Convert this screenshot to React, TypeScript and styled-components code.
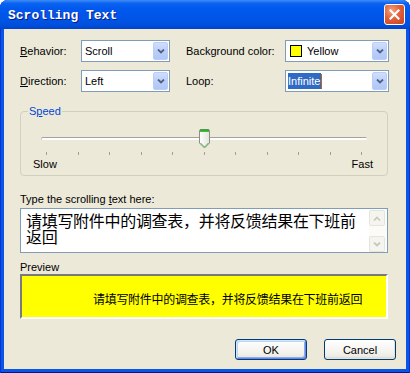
import React from 'react';
import styled, { createGlobalStyle } from 'styled-components';

const GlobalStyle = createGlobalStyle`
  html, body {
    margin: 0;
    padding: 0;
    background: #ffffff;
  }
  body {
    font-family: "Liberation Sans", Arial, sans-serif;
    font-size: 11px;
    color: #000;
  }
`;

const Window = styled.div`
  width: 410px;
  height: 373px;
  box-sizing: border-box;
  display: flex;
  flex-direction: column;
  background: #0b55e4;
  border-radius: 8px 8px 0 0;
  overflow: hidden;
  box-shadow: inset 1px 0 0 #0831d9, inset -1px 0 0 #0831d9, inset 0 -1px 0 #00138c;
`;

const TitleBar = styled.div`
  height: 29px;
  flex-shrink: 0;
  display: flex;
  align-items: center;
  justify-content: space-between;
  padding: 0 5px 0 8px;
  background: linear-gradient(180deg, #3d8cf7 0%, #0a62f0 12%, #0058ee 30%, #0055e6 60%, #0050df 85%, #0242c8 100%);
`;

const Title = styled.span`
  font-family: "Liberation Mono", "Courier New", monospace;
  font-weight: bold;
  font-size: 13px;
  color: #fff;
  text-shadow: 1px 1px 0 #0a1a8a;
  margin-top: 1px;
`;

const CloseButton = styled.div`
  width: 21px;
  height: 21px;
  box-sizing: border-box;
  border: 1px solid #fff;
  border-radius: 3px;
  display: flex;
  align-items: center;
  justify-content: center;
  background: radial-gradient(circle at 35% 30%, #f3a27f 0%, #e2613a 45%, #c7411b 100%);
`;

const Content = styled.div`
  flex: 1;
  margin: 0 4px 4px;
  background: #ece9d8;
  padding: 11px 18px 9px 16px;
  display: flex;
  flex-direction: column;
`;

const FieldsGrid = styled.div`
  display: grid;
  grid-template-columns: 61px 105px 99px 104px;
  row-gap: 8px;
  align-items: center;
`;

const Label = styled.span`
  line-height: 14px;
  white-space: nowrap;
`;

const Combo = styled.div<{ $width: number }>`
  width: ${(p) => p.$width}px;
  height: 22px;
  box-sizing: border-box;
  border: 1px solid #7f9db9;
  background: #fff;
  display: flex;
  align-items: center;
`;

const ComboValue = styled.div`
  flex: 1;
  display: flex;
  align-items: center;
  padding-left: 3px;
  line-height: 14px;
  white-space: nowrap;
`;

const Swatch = styled.span<{ $color: string }>`
  width: 12px;
  height: 12px;
  box-sizing: border-box;
  border: 1px solid #000;
  background: ${(p) => p.$color};
  margin: 0 5px 0 1px;
`;

const Selected = styled.span`
  background: #316ac5;
  color: #fff;
  padding: 1px 1px 1px 0;
  margin-left: -1px;
`;

const Caret = styled.span`
  width: 1px;
  height: 15px;
  background: #b76a16;
`;

const DropButton = styled.div`
  width: 15px;
  height: 18px;
  margin-right: 1px;
  box-sizing: border-box;
  border: 1px solid #b9cdf6;
  border-radius: 2px;
  background: linear-gradient(180deg, #d2defc 0%, #bccffa 50%, #b0c6f6 100%);
  display: flex;
  align-items: center;
  justify-content: center;
`;

const GroupBox = styled.fieldset`
  margin: 13px 0 0;
  padding: 0 0 4px;
  border: 1px solid #d0d0bf;
  border-radius: 4px;
  min-width: 0;
`;

const Legend = styled.legend`
  margin-left: 7px;
  padding: 0 1px;
  color: #0046d5;
  line-height: 13px;
`;

const TrackArea = styled.div`
  position: relative;
  margin: 11px 20px 0;
  height: 20px;
`;

const TrackLine = styled.div`
  position: relative;
  top: 8px;
  height: 2px;
  background: #fff;
  border-top: 1px solid #a3a29e;
  border-left: 1px solid #c3c2bb;
  border-radius: 2px;
`;

const Thumb = styled.svg`
  position: absolute;
  top: 0;
  left: 158px;
`;

const Ticks = styled.div`
  display: flex;
  justify-content: space-between;
  margin: 3px 25px 0;
  height: 3px;
`;

const Tick = styled.span`
  width: 1px;
  height: 3px;
  background: #a1a192;
`;

const ScaleLabels = styled.div`
  display: flex;
  justify-content: space-between;
  padding: 2px 14px 0 12px;
  line-height: 14px;
`;

const FieldLabel = styled.div<{ $top: number }>`
  margin-top: ${(p) => p.$top}px;
  line-height: 14px;
`;

const TextBox = styled.div`
  margin-top: 2px;
  height: 45px;
  box-sizing: border-box;
  border: 1px solid #7f9db9;
  background: #fff;
  display: flex;
`;

const TextContent = styled.div`
  flex: 1;
  padding: 3px 4px 0 5px;
  font-family: "Noto Sans CJK SC", "Liberation Sans", sans-serif;
  font-size: 16px;
  line-height: 16px;
  letter-spacing: -0.3px;
  overflow: hidden;
`;

const ScrollBar = styled.div`
  width: 17px;
  padding: 1px 1px 0 0;
  display: flex;
  flex-direction: column;
  justify-content: space-between;
  background: #fbfbf8;
`;

const ScrollButton = styled.div`
  width: 16px;
  height: 16px;
  box-sizing: border-box;
  border: 1px solid #e6e5dd;
  border-radius: 2px;
  background: #f5f4ef;
  display: flex;
  align-items: center;
  justify-content: center;
`;

const Preview = styled.div<{ $bg: string }>`
  height: 45px;
  box-sizing: border-box;
  background: ${(p) => p.$bg};
  border-style: solid;
  border-width: 2px;
  border-color: #7a7a7a #ffffff #ffffff #7a7a7a;
  display: flex;
  align-items: center;
  padding: 3px 0 0 71px;
  font-family: "Noto Sans CJK SC", "Liberation Sans", sans-serif;
  font-size: 12px;
  letter-spacing: -0.3px;
  white-space: nowrap;
`;

const ButtonRow = styled.div`
  display: flex;
  justify-content: flex-end;
  gap: 17px;
  margin: 20px -8px 0 0;
`;

const Button = styled.div<{ $default?: boolean }>`
  width: 72px;
  height: 21px;
  box-sizing: border-box;
  border: 1px solid #003c74;
  border-radius: 3px;
  background: linear-gradient(180deg, #ffffff 0%, #f4f3ee 60%, #ecebe4 86%, #d6d0c5 100%);
  display: flex;
  align-items: center;
  justify-content: center;
  box-shadow: ${(p) =>
    p.$default
      ? 'inset 1px 1px 0 #cee7ff, inset -1px -1px 0 #6982ee, inset 2px 2px 0 #bcd4f6, inset -2px -2px 0 #89ade4'
      : 'inset -1px -1px 0 #e3e0d6'};
`;

const Chevron = ({ color }: { color: string }) => (
  <svg width="8" height="5" viewBox="0 0 8 5">
    <path d="M1 0.5 L4 3.5 L7 0.5" fill="none" stroke={color} strokeWidth="1.8" />
  </svg>
);

const ChevronUp = ({ color }: { color: string }) => (
  <svg width="8" height="5" viewBox="0 0 8 5">
    <path d="M1 4.5 L4 1.5 L7 4.5" fill="none" stroke={color} strokeWidth="1.6" />
  </svg>
);

const ComboBox = ({ width, children }: { width: number; children: React.ReactNode }) => (
  <Combo $width={width}>
    <ComboValue>{children}</ComboValue>
    <DropButton>
      <Chevron color="#4d6185" />
    </DropButton>
  </Combo>
);

const message = '请填写附件中的调查表，并将反馈结果在下班前返回';

const App: React.FC = () => {
  const ticks = Array.from({ length: 11 });

  return (
    <>
      <GlobalStyle />
      <Window>
        <TitleBar>
          <Title>Scrolling Text</Title>
          <CloseButton>
            <svg width="11" height="11" viewBox="0 0 11 11">
              <path d="M1.5 1.5 L9.5 9.5 M9.5 1.5 L1.5 9.5" stroke="#fff" strokeWidth="2.2" strokeLinecap="square" />
            </svg>
          </CloseButton>
        </TitleBar>
        <Content>
          <FieldsGrid>
            <Label>
              <u>B</u>ehavior:
            </Label>
            <ComboBox width={89}>Scroll</ComboBox>
            <Label>Background color:</Label>
            <ComboBox width={104}>
              <Swatch $color="#ffff00" />
              Yellow
            </ComboBox>
            <Label>
              <u>D</u>irection:
            </Label>
            <ComboBox width={89}>Left</ComboBox>
            <Label>Loop:</Label>
            <ComboBox width={104}>
              <Selected>Infinite</Selected>
              <Caret />
            </ComboBox>
          </FieldsGrid>

          <GroupBox>
            <Legend>
              S<u>p</u>eed
            </Legend>
            <TrackArea>
              <TrackLine />
              <Thumb width="11" height="20" viewBox="0 0 11 20">
                <defs>
                  <linearGradient id="thumbBody" x1="0" y1="0" x2="1" y2="0">
                    <stop offset="0" stopColor="#ffffff" />
                    <stop offset="1" stopColor="#e4e3dc" />
                  </linearGradient>
                </defs>
                <path d="M0.5 2 Q0.5 0.5 2 0.5 H9 Q10.5 0.5 10.5 2 V14 L5.5 19 L0.5 14 Z" fill="url(#thumbBody)" stroke="#8e8d88" />
                <path d="M1 1.5 Q1 1 2 1 H9 Q10 1 10 1.5 V3 H1 Z" fill="#3fbf3f" />
                <path d="M1 1 H10" stroke="#1e9b1e" strokeWidth="1" />
                <path d="M1.5 14 L5.5 18 L9.5 14" fill="none" stroke="#4cb84c" strokeWidth="1" />
              </Thumb>
            </TrackArea>
            <Ticks>
              {ticks.map((_, i) => (
                <Tick key={i} />
              ))}
            </Ticks>
            <ScaleLabels>
              <span>Slow</span>
              <span>Fast</span>
            </ScaleLabels>
          </GroupBox>

          <FieldLabel $top={16}>
            Type the scrolling <u>t</u>ext here:
          </FieldLabel>
          <TextBox>
            <TextContent>{message}</TextContent>
            <ScrollBar>
              <ScrollButton>
                <ChevronUp color="#cac8bb" />
              </ScrollButton>
              <ScrollButton>
                <Chevron color="#cac8bb" />
              </ScrollButton>
            </ScrollBar>
          </TextBox>

          <FieldLabel $top={7}>Preview</FieldLabel>
          <Preview $bg="#ffff00">{message}</Preview>

          <ButtonRow>
            <Button $default>OK</Button>
            <Button>Cancel</Button>
          </ButtonRow>
        </Content>
      </Window>
    </>
  );
};

export default App;
